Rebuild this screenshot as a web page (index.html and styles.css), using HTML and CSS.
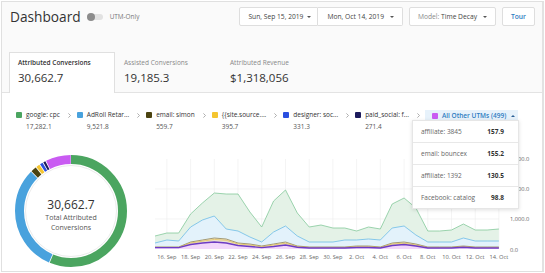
FILE: index.html
```html
<!DOCTYPE html>
<html>
<head>
<meta charset="utf-8">
<title>Dashboard</title>
<link rel="stylesheet" href="styles.css">
</head>
<body>
<div class="app">
  <header class="topbar">
    <div class="title-group">
      <h1 class="title">Dashboard</h1>
      <span class="toggle"><span class="knob"></span></span>
      <span class="toggle-label">UTM-Only</span>
    </div>
    <div class="controls">
      <div class="btn-group">
        <button class="btn date-from">Sun, Sep 15, 2019<span class="caret"></span></button>
        <button class="btn date-to">Mon, Oct 14, 2019<span class="caret"></span></button>
      </div>
      <button class="btn model"><span class="muted">Model:</span>&nbsp;Time Decay<span class="caret"></span></button>
      <button class="btn tour">Tour</button>
    </div>
  </header>

  <nav class="tabs">
    <div class="tab active">
      <div class="tab-label">Attributed Conversions</div>
      <div class="tab-value">30,662.7</div>
    </div>
    <div class="tab">
      <div class="tab-label">Assisted Conversions</div>
      <div class="tab-value">19,185.3</div>
    </div>
    <div class="tab">
      <div class="tab-label">Attributed Revenue</div>
      <div class="tab-value">$1,318,056</div>
    </div>
  </nav>

  <main class="content">
    <div class="legend">
      <div class="legend-item">
        <span class="swatch c-green"></span><span class="li-name">google: cpc</span><span class="li-value">17,282.1</span>
      </div>
      <span class="sep"><svg width="3" height="5" viewBox="0 0 3 5"><polyline points="0.4,0.4 2.5,2.5 0.4,4.6" fill="none" stroke="#9a9a9a" stroke-width="0.8"/></svg></span>
      <div class="legend-item">
        <span class="swatch c-blue"></span><span class="li-name">AdRoll Retar...</span><span class="li-value">9,521.8</span>
      </div>
      <span class="sep"><svg width="3" height="5" viewBox="0 0 3 5"><polyline points="0.4,0.4 2.5,2.5 0.4,4.6" fill="none" stroke="#9a9a9a" stroke-width="0.8"/></svg></span>
      <div class="legend-item">
        <span class="swatch c-olive"></span><span class="li-name">email: simon</span><span class="li-value">559.7</span>
      </div>
      <span class="sep"><svg width="3" height="5" viewBox="0 0 3 5"><polyline points="0.4,0.4 2.5,2.5 0.4,4.6" fill="none" stroke="#9a9a9a" stroke-width="0.8"/></svg></span>
      <div class="legend-item">
        <span class="swatch c-yellow"></span><span class="li-name">{{site.source....</span><span class="li-value">395.7</span>
      </div>
      <span class="sep"><svg width="3" height="5" viewBox="0 0 3 5"><polyline points="0.4,0.4 2.5,2.5 0.4,4.6" fill="none" stroke="#9a9a9a" stroke-width="0.8"/></svg></span>
      <div class="legend-item">
        <span class="swatch c-royal"></span><span class="li-name">designer: soc...</span><span class="li-value">331.3</span>
      </div>
      <span class="sep"><svg width="3" height="5" viewBox="0 0 3 5"><polyline points="0.4,0.4 2.5,2.5 0.4,4.6" fill="none" stroke="#9a9a9a" stroke-width="0.8"/></svg></span>
      <div class="legend-item">
        <span class="swatch c-navy"></span><span class="li-name">paid_social: f...</span><span class="li-value">271.4</span>
      </div>
      <span class="sep"><svg width="3" height="5" viewBox="0 0 3 5"><polyline points="0.4,0.4 2.5,2.5 0.4,4.6" fill="none" stroke="#9a9a9a" stroke-width="0.8"/></svg></span>
      <div class="legend-pill">
        <span class="swatch c-purple"></span><span class="pill-name">All Other UTMs (499)</span><span class="caret-up"></span>
      </div>
    </div>

    <div class="viz">
      <div class="donut">
        <svg class="donut-svg" width="112" height="112" viewBox="0 0 112 112">
          <g transform="rotate(-90 56 56)" fill="none" stroke-width="9">
            <circle cx="56" cy="56" r="51.5" stroke="#4ba560" stroke-dasharray="181.6 400" stroke-dashoffset="0"/>
            <circle cx="56" cy="56" r="51.5" stroke="#49a2dd" stroke-dasharray="99.7 400" stroke-dashoffset="-182.38"/>
            <circle cx="56" cy="56" r="51.5" stroke="#4b4310" stroke-dasharray="5.1 400" stroke-dashoffset="-282.86"/>
            <circle cx="56" cy="56" r="51.5" stroke="#f4c530" stroke-dasharray="3.4 400" stroke-dashoffset="-288.77"/>
            <circle cx="56" cy="56" r="51.5" stroke="#2b4fe0" stroke-dasharray="2.7 400" stroke-dashoffset="-292.94"/>
            <circle cx="56" cy="56" r="51.5" stroke="#1c1b5c" stroke-dasharray="2.1 400" stroke-dashoffset="-296.44"/>
            <circle cx="56" cy="56" r="51.5" stroke="#c95bf2" stroke-dasharray="23.5 400" stroke-dashoffset="-299.30"/>
          </g>
          <circle cx="56" cy="56" r="45.5" fill="#fff" stroke="#e6e6e6" stroke-width="0.8"/>
        </svg>
        <div class="donut-label">
          <div class="donut-value">30,662.7</div>
          <div class="donut-caption">Total Attributed<br>Conversions</div>
        </div>
      </div>

      <svg class="chart" width="385" height="112" viewBox="0 0 385 112">
        <g stroke="#ececec" stroke-width="0.6">
          <line x1="7" y1="39" x2="351" y2="39"/>
          <line x1="7" y1="69" x2="351" y2="69"/>
          <line x1="18.9" y1="9" x2="18.9" y2="99"/>
          <line x1="42.6" y1="9" x2="42.6" y2="99"/>
          <line x1="66.3" y1="9" x2="66.3" y2="99"/>
          <line x1="90.0" y1="9" x2="90.0" y2="99"/>
          <line x1="113.7" y1="9" x2="113.7" y2="99"/>
          <line x1="137.5" y1="9" x2="137.5" y2="99"/>
          <line x1="161.2" y1="9" x2="161.2" y2="99"/>
          <line x1="184.9" y1="9" x2="184.9" y2="99"/>
          <line x1="208.6" y1="9" x2="208.6" y2="99"/>
          <line x1="232.3" y1="9" x2="232.3" y2="99"/>
          <line x1="256.1" y1="9" x2="256.1" y2="99"/>
          <line x1="279.8" y1="9" x2="279.8" y2="99"/>
          <line x1="303.5" y1="9" x2="303.5" y2="99"/>
          <line x1="327.2" y1="9" x2="327.2" y2="99"/>
          <line x1="350.9" y1="9" x2="350.9" y2="99"/>
        </g>
        <!-- green area -->
        <polygon fill="#e4f2e7" points="7,86 18.9,83 30.7,83 42.6,64 54.4,53 66.3,43 78.2,44 90,44 101.9,62 113.7,77 125.6,51 137.5,40 149.3,63 161.2,77 173,75 184.9,78 196.8,78 208.6,81 220.5,77 232.3,79 244.2,54 256.1,48 267.9,58 279.8,81 291.6,81 303.5,80 315.4,74 327.2,80 339.1,80 350.9,79 350.9,91 339.1,91 327.2,91 315.4,88 303.5,92 291.6,92 279.8,92 267.9,85 256.1,76 244.2,78 232.3,90 220.5,89 208.6,90 196.8,90 184.9,92 173,92 161.2,92 149.3,86 137.5,76 125.6,82 113.7,92 101.9,87 90,81 78.2,79 66.3,66 54.4,70 42.6,77 30.7,91 18.9,90 7,93"/>
        <!-- blue area -->
        <polygon fill="#e3f2fb" points="7,93 18.9,90 30.7,91 42.6,77 54.4,70 66.3,66 78.2,79 90,81 101.9,87 113.7,92 125.6,82 137.5,76 149.3,86 161.2,92 173,92 184.9,92 196.8,90 208.6,90 220.5,89 232.3,90 244.2,78 256.1,76 267.9,85 279.8,92 291.6,92 303.5,92 315.4,88 327.2,91 339.1,91 350.9,91 350.9,97 339.1,97 327.2,97 315.4,96 303.5,97 291.6,97 279.8,97 267.9,94 256.1,92 244.2,93 232.3,97 220.5,96 208.6,96 196.8,97 184.9,97 173,97 161.2,97 149.3,96 137.5,92 125.6,94 113.7,96 101.9,94 90,93 78.2,89 66.3,88 54.4,90 42.6,92 30.7,97 18.9,97 7,97"/>
        <!-- lower stack -->
        <polygon fill="#e9e1d3" points="7,97 18.9,97 30.7,97 42.6,92 54.4,90 66.3,88 78.2,89 90,93 101.9,94 113.7,96 125.6,94 137.5,92 149.3,96 161.2,97 173,97 184.9,97 196.8,97 208.6,96 220.5,96 232.3,97 244.2,93 256.1,92 267.9,94 279.8,97 291.6,97 303.5,97 315.4,96 327.2,97 339.1,97 350.9,97 350.9,99 7,99"/>
        <polygon fill="#f2d7fb" points="7,97.6 18.9,97.6 30.7,97.6 42.6,94.5 54.4,93 66.3,92 78.2,93 90,95.5 101.9,96.5 113.7,97.6 125.6,96.5 137.5,95 149.3,97.3 161.2,98 173,98 184.9,98 196.8,98 208.6,97.5 220.5,97.5 232.3,98 244.2,95.5 256.1,94.5 267.9,96 279.8,98 291.6,98 303.5,98 315.4,97.3 327.2,98 339.1,98 350.9,98 350.9,99 7,99"/>
        <polyline fill="none" stroke="#84c99a" stroke-width="0.8" points="7,86 18.9,83 30.7,83 42.6,64 54.4,53 66.3,43 78.2,44 90,44 101.9,62 113.7,77 125.6,51 137.5,40 149.3,63 161.2,77 173,75 184.9,78 196.8,78 208.6,81 220.5,77 232.3,79 244.2,54 256.1,48 267.9,58 279.8,81 291.6,81 303.5,80 315.4,74 327.2,80 339.1,80 350.9,79"/>
        <polyline fill="none" stroke="#6bbbe5" stroke-width="0.8" points="7,93 18.9,90 30.7,91 42.6,77 54.4,70 66.3,66 78.2,79 90,81 101.9,87 113.7,92 125.6,82 137.5,76 149.3,86 161.2,92 173,92 184.9,92 196.8,90 208.6,90 220.5,89 232.3,90 244.2,78 256.1,76 267.9,85 279.8,92 291.6,92 303.5,92 315.4,88 327.2,91 339.1,91 350.9,91"/>
        <polyline fill="none" stroke="#9a9168" stroke-width="0.9" points="7,97 18.9,97 30.7,97 42.6,92 54.4,90 66.3,88 78.2,89 90,93 101.9,94 113.7,96 125.6,94 137.5,92 149.3,96 161.2,97 173,97 184.9,97 196.8,97 208.6,96 220.5,96 232.3,97 244.2,93 256.1,92 267.9,94 279.8,97 291.6,97 303.5,97 315.4,96 327.2,97 339.1,97 350.9,97"/>
        <polyline fill="none" stroke="#e6c24a" stroke-width="0.7" points="7,97.4 18.9,97.4 30.7,97.4 42.6,93 54.4,91.2 66.3,89.4 78.2,90.3 90,94 101.9,95 113.7,96.8 125.6,95 137.5,93.2 149.3,96.6 161.2,97.5 173,97.5 184.9,97.5 196.8,97.5 208.6,96.8 220.5,96.8 232.3,97.5 244.2,94 256.1,93.2 267.9,95 279.8,97.5 291.6,97.5 303.5,97.5 315.4,96.7 327.2,97.5 339.1,97.5 350.9,97.5"/>
        <polyline fill="none" stroke="#6d3cc4" stroke-width="1.4" points="7,97.6 18.9,97.6 30.7,97.6 42.6,94.5 54.4,93 66.3,92 78.2,93 90,95.5 101.9,96.5 113.7,97.6 125.6,96.5 137.5,95 149.3,97.3 161.2,98 173,98 184.9,98 196.8,98 208.6,97.5 220.5,97.5 232.3,98 244.2,95.5 256.1,94.5 267.9,96 279.8,98 291.6,98 303.5,98 315.4,97.3 327.2,98 339.1,98 350.9,98"/>
        <g class="axis-y" font-size="5.7" fill="#666">
          <text x="362" y="11">3,000.0</text>
          <text x="362" y="41">2,000.0</text>
          <text x="362" y="71">1,000.0</text>
          <text x="362" y="102">0.0</text>
        </g>
        <g class="axis-x" font-size="5.7" fill="#666" text-anchor="middle">
          <text x="18.9" y="109">16. Sep</text>
          <text x="42.6" y="109">18. Sep</text>
          <text x="66.3" y="109">20. Sep</text>
          <text x="90.0" y="109">22. Sep</text>
          <text x="113.7" y="109">24. Sep</text>
          <text x="137.5" y="109">26. Sep</text>
          <text x="161.2" y="109">28. Sep</text>
          <text x="184.9" y="109">30. Sep</text>
          <text x="208.6" y="109">2. Oct</text>
          <text x="232.3" y="109">4. Oct</text>
          <text x="256.1" y="109">6. Oct</text>
          <text x="279.8" y="109">8. Oct</text>
          <text x="303.5" y="109">10. Oct</text>
          <text x="327.2" y="109">12. Oct</text>
          <text x="350.9" y="109">14. Oct</text>
        </g>
      </svg>
    </div>

    <div class="dropdown">
      <div class="dd-row"><span class="dd-name">affiliate: 3845</span><span class="dd-value">157.9</span></div>
      <div class="dd-row"><span class="dd-name">email: bouncex</span><span class="dd-value">155.2</span></div>
      <div class="dd-row"><span class="dd-name">affiliate: 1392</span><span class="dd-value">130.5</span></div>
      <div class="dd-row"><span class="dd-name">Facebook: catalog</span><span class="dd-value">98.8</span></div>
    </div>
  </main>
</div>
</body>
</html>
```

FILE: styles.css
```css
* { box-sizing: border-box; margin: 0; padding: 0; }

html, body {
  width: 545px;
  height: 273px;
  overflow: hidden;
  background: #ffffff;
}

body {
  font-family: "Open Sans", "DejaVu Sans", sans-serif;
  color: #333;
  padding: 1px;
}

.app {
  width: 543px;
  height: 271px;
  border: 1px solid #e0e0e0;
  border-right: 2px solid #e2e2e2;
  background: #fafafa;
  display: flex;
  flex-direction: column;
}

/* ---------- top bar ---------- */
.topbar {
  display: flex;
  justify-content: space-between;
  align-items: center;
  padding: 5px 7px 0 8px;
}

.title-group {
  display: flex;
  align-items: center;
}

.title {
  font-size: 13.7px;
  font-weight: 400;
  color: #333;
  line-height: 19px;
}

.toggle {
  display: flex;
  align-items: center;
  width: 16px;
  height: 6px;
  margin-left: 6px;
  background: #e2e2e2;
  border-radius: 3px;
}

.knob {
  width: 8px;
  height: 8px;
  border-radius: 50%;
  background: #8c8c8c;
}

.toggle-label {
  margin-left: 7px;
  font-size: 6.4px;
  color: #777;
}

.controls {
  display: flex;
  gap: 6px;
}

.btn-group {
  display: flex;
}

.btn {
  display: flex;
  align-items: center;
  height: 19px;
  border: 1px solid #dedede;
  border-radius: 2px;
  background: #fff;
  font-family: inherit;
  font-size: 6.7px;
  color: #444;
  padding: 0 7px 0 8px;
  white-space: nowrap;
}

.btn-group .btn:first-child {
  width: 79px;
  justify-content: space-between;
  padding: 0 6px 0 8px;
  border-top-right-radius: 0;
  border-bottom-right-radius: 0;
}

.btn-group .btn:last-child {
  border-left: none;
  border-top-left-radius: 0;
  border-bottom-left-radius: 0;
  padding-left: 9px;
  padding-right: 8px;
}

.model { padding-left: 8px; padding-right: 8px; }

.muted { color: #8a8a8a; }

.caret {
  flex: none;
  width: 0;
  height: 0;
  margin-left: 6px;
  border-left: 2px solid transparent;
  border-right: 2px solid transparent;
  border-top: 2.5px solid #555;
}

.date-from .caret { margin-left: 3px; }

.tour {
  color: #2d7cc1;
  font-weight: 600;
  padding: 0 8px;
}

/* ---------- tabs ---------- */
.tabs {
  display: flex;
  margin-top: 26px;
  padding-left: 7px;
  height: 41px;
  border-bottom: 1px solid #e3e3e3;
}

.tab {
  width: 106px;
  height: 41px;
  padding: 5px 0 0 8px;
  border: 1px solid transparent;
  border-bottom: none;
}

.tab.active {
  background: #fff;
  border-color: #e0e0e0;
}

.tab-label {
  font-size: 6.5px;
  line-height: 9px;
  color: #888;
  white-space: nowrap;
}

.tab.active .tab-label {
  color: #333;
  font-weight: 600;
}

.tab-value {
  margin-top: 3px;
  font-size: 11.5px;
  line-height: 15px;
  color: #333;
}

/* ---------- content ---------- */
.content {
  flex: 1;
  position: relative;
  background: #fff;
  padding: 16px 0 0 14px;
}

.legend {
  display: flex;
  align-items: flex-start;
}

.legend-item {
  display: grid;
  grid-template-columns: 6px auto;
  column-gap: 4px;
  font-size: 6.5px;
  line-height: 12px;
  white-space: nowrap;
}

.swatch {
  width: 6px;
  height: 6px;
  border-radius: 1px;
  align-self: center;
}

.li-name { color: #333; }

.li-value {
  grid-column: 2;
  color: #555;
}

.sep {
  display: flex;
  align-items: center;
  height: 12px;
  margin: 0 6px 0 8px;
}

.sep svg { display: block; }

.legend-pill {
  display: flex;
  align-items: center;
  gap: 4px;
  height: 11px;
  margin-top: 1px;
  margin-left: -1px;
  padding: 0 3px 0 7px;
  background: #e7f2fb;
  font-size: 6.5px;
  white-space: nowrap;
}

.pill-name {
  color: #2d7cc1;
  font-weight: 600;
}

.caret-up {
  width: 0;
  height: 0;
  margin-left: 1px;
  border-left: 2px solid transparent;
  border-right: 2px solid transparent;
  border-bottom: 2.5px solid #2b5f95;
}

.c-green { background: #4ba560; }
.c-blue { background: #49a2dd; }
.c-olive { background: #4b4310; }
.c-yellow { background: #f4c530; }
.c-royal { background: #2b4fe0; }
.c-navy { background: #1c1b5c; }
.c-purple { background: #c95bf2; }

/* ---------- viz ---------- */
.viz {
  display: flex;
  align-items: flex-start;
  margin-top: 17px;
}

.donut {
  display: grid;
  margin-top: 5px;
  margin-left: -1px;
  width: 112px;
  height: 112px;
}

.donut-svg, .donut-label { grid-area: 1 / 1; }

.donut-svg { display: block; }

.donut-label {
  align-self: start;
  justify-self: center;
  margin-top: 41px;
  text-align: center;
}

.donut-value {
  font-size: 12px;
  line-height: 17px;
  color: #333;
}

.donut-caption {
  font-size: 7px;
  line-height: 10px;
  color: #555;
}

.chart {
  display: block;
  margin-left: 21px;
  font-family: "Open Sans", "DejaVu Sans", sans-serif;
}

/* ---------- dropdown ---------- */
.dropdown {
  position: absolute;
  left: 410px;
  top: 27px;
  width: 107px;
  background: #fff;
  border: 1px solid #e6e6e6;
  box-shadow: 0 1px 4px rgba(0, 0, 0, 0.13);
}

.dd-row {
  display: flex;
  justify-content: space-between;
  align-items: center;
  height: 22px;
  padding: 0 14px 0 8px;
  border-top: 1px solid #e8e8e8;
  font-size: 6.5px;
}

.dd-row:first-child { border-top: none; height: 21px; }

.dd-name { color: #666; }

.dd-value {
  color: #333;
  font-weight: 700;
}
```
